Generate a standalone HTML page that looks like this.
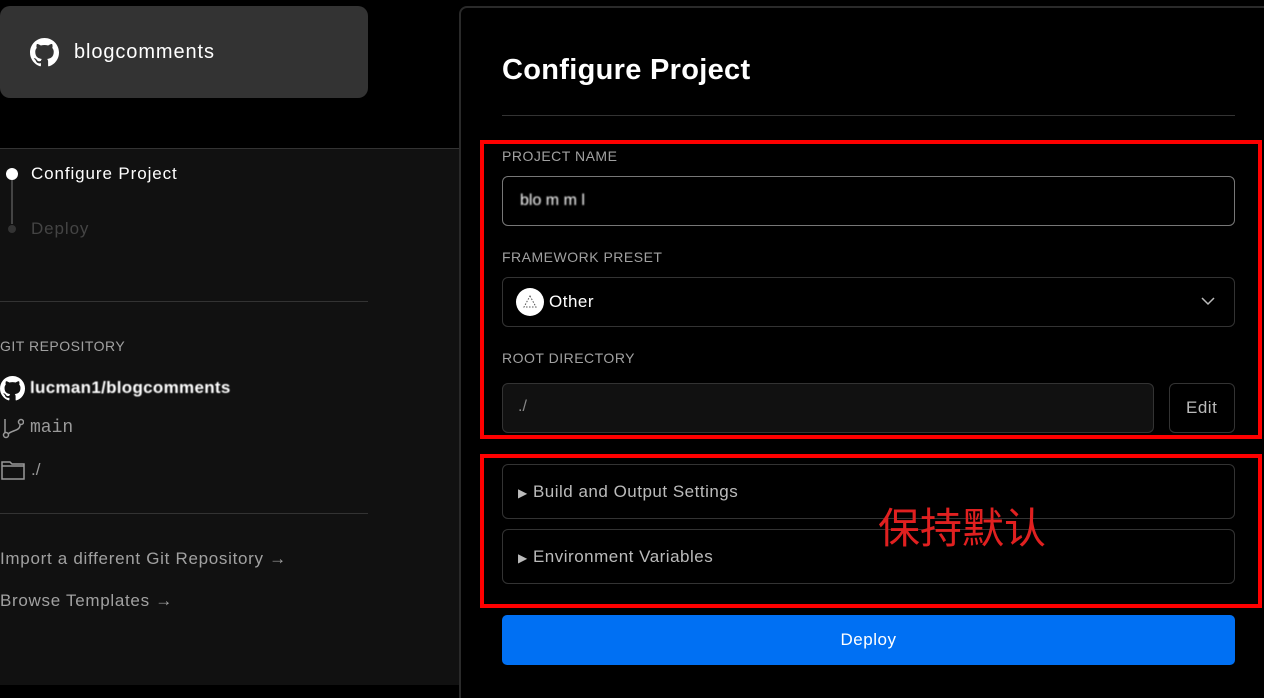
<!DOCTYPE html>
<html style="overflow:hidden;height:698px"><head><meta charset="utf-8"><style>
*{box-sizing:border-box;margin:0;padding:0}
body{width:1264px;height:698px;background:#000;position:relative;overflow:hidden;font-family:"Liberation Sans",sans-serif;color:#ededed}
.abs{position:absolute;white-space:nowrap}
.card{left:0;top:6px;width:368px;height:92px;background:#333;border-radius:10px}
.side{left:0;top:148px;width:459px;height:537px;background:#111;border-top:1px solid #333}
.main{left:459px;top:6px;width:820px;height:692px;border:2px solid #2a2a2a;border-bottom:none;border-right:none;border-radius:8px 0 0 0;background:#000}
.lbl{font-size:14px;color:#a1a1a1;letter-spacing:.5px}
.box{border:1px solid #333;border-radius:6px;background:#0a0a0a}
.red{border:4px solid #f00}
</style></head><body>
<div class="abs card"></div>
<svg class="abs" style="left:30px;top:38px" width="29" height="29" viewBox="0 0 16 16"><path fill="#fff" d="M8 0C3.58 0 0 3.58 0 8c0 3.54 2.290 6.53 5.47 7.59.4.07.55-.17.55-.38v-1.33c-2.23.48-2.7-1.08-2.7-1.08-.36-.92-.89-1.17-.89-1.17-.73-.5.05-.49.05-.49.8.06 1.23.83 1.23.83.71 1.22 1.87.87 2.33.66.07-.52.28-.87.5-1.07-1.780-.2-3.64-.89-3.64-3.95 0-.87.31-1.59.82-2.15-.08-.2-.36-1.02.08-2.12 0 0 .67-.21 2.2.82a7.6 7.6 0 014 0c1.53-1.04 2.2-.82 2.2-.82.44 1.1.16 1.92.08 2.12.51.56.82 1.27.82 2.15 0 3.07-1.87 3.75-3.65 3.95.29.25.54.73.54 1.48v2.2c0 .21.15.46.55.38A8.01 8.01 0 0016 8c0-4.42-3.58-8-8-8z"/></svg>
<div class="abs" style="left:74px;top:41px;font-size:20px;color:#fff;letter-spacing:.9px">blogcomments</div>
<div class="abs side"></div>
<div class="abs" style="left:6px;top:168px;width:12px;height:12px;border-radius:50%;background:#fff"></div>
<div class="abs" style="left:11px;top:180px;width:2px;height:44px;background:#444"></div>
<div class="abs" style="left:8px;top:225px;width:8px;height:8px;border-radius:50%;background:#333"></div>
<div class="abs" style="left:31px;top:164px;font-size:17px;color:#fff;letter-spacing:.9px">Configure Project</div>
<div class="abs" style="left:31px;top:219px;font-size:17px;color:#444;letter-spacing:.9px">Deploy</div>
<div class="abs" style="left:0;top:301px;width:368px;height:1px;background:#333"></div>
<div class="abs lbl" style="left:0;top:338px">GIT REPOSITORY</div>
<svg class="abs" style="left:0;top:376px" width="25" height="25" viewBox="0 0 16 16"><path fill="#fff" d="M8 0C3.58 0 0 3.58 0 8c0 3.54 2.29 6.53 5.47 7.59.4.07.55-.17.55-.38v-1.33c-2.23.48-2.7-1.08-2.7-1.08-.36-.92-.89-1.17-.89-1.17-.73-.5.05-.49.05-.49.8.06 1.23.83 1.23.83.71 1.22 1.87.87 2.33.66.07-.52.28-.87.5-1.07-1.78-.2-3.64-.89-3.64-3.95 0-.87.31-1.59.82-2.15-.08-.2-.36-1.02.08-2.12 0 0 .67-.21 2.2.82a7.6 7.6 0 014 0c1.53-1.04 2.2-.82 2.2-.82.44 1.1.16 1.92.08 2.12.51.56.82 1.27.82 2.15 0 3.07-1.87 3.75-3.65 3.95.29.25.54.73.54 1.48v2.2c0 .21.15.46.55.38A8.01 8.01 0 0016 8c0-4.42-3.58-8-8-8z"/></svg>
<div class="abs" style="left:30px;top:378px;font-size:17px;color:#fff;font-weight:bold;letter-spacing:.3px;filter:blur(.6px)">lucman1/blogcomments</div>
<svg class="abs" style="left:2px;top:417px" width="22" height="22" viewBox="0 0 22 22" fill="none" stroke="#999" stroke-width="1.5"><path d="M3 2v14"/><circle cx="4" cy="18" r="2.5"/><circle cx="19" cy="5" r="2.5"/><path d="M18 8c0 6-8 5-12 9"/></svg>
<div class="abs" style="left:30px;top:418px;font-size:18px;color:#999;font-family:'Liberation Mono',monospace">main</div>
<svg class="abs" style="left:1px;top:460px" width="24" height="20" viewBox="0 0 24 20" fill="none" stroke="#999" stroke-width="1.5"><path d="M1 2h8l2 2h12v15H1z M1 6h22"/></svg>
<div class="abs" style="left:31px;top:460px;font-size:17px;color:#999">./</div>
<div class="abs" style="left:0;top:513px;width:368px;height:1px;background:#333"></div>
<div class="abs" style="left:0;top:549px;font-size:17px;color:#a1a1a1;letter-spacing:.7px">Import a different Git Repository →</div>
<div class="abs" style="left:0;top:591px;font-size:17px;color:#a1a1a1;letter-spacing:.7px">Browse Templates →</div>

<div class="abs main"></div>
<div class="abs" style="left:502px;top:54px;font-size:29px;font-weight:bold;color:#fff;letter-spacing:.3px">Configure Project</div>
<div class="abs" style="left:502px;top:115px;width:733px;height:1px;background:#333"></div>
<div class="abs lbl" style="left:502px;top:148px">PROJECT NAME</div>
<div class="abs box" style="left:502px;top:176px;width:733px;height:50px;background:#000;border-color:#777"></div>
<div class="abs" style="left:520px;top:192px;font-size:16px;color:#fff;filter:blur(.8px)">blo  m  m  l</div>
<div class="abs lbl" style="left:502px;top:249px">FRAMEWORK PRESET</div>
<div class="abs box" style="left:502px;top:277px;width:733px;height:50px;background:#000"></div>
<div class="abs" style="left:516px;top:288px;width:28px;height:28px;border-radius:50%;background:#fff"></div>
<svg class="abs" style="left:522px;top:294px" width="16" height="16" viewBox="0 0 16 16" fill="none" stroke="#555" stroke-dasharray="1.5 1.5"><path d="M8 2L14 13H2z"/></svg>
<div class="abs" style="left:549px;top:292px;font-size:17px;color:#fff;letter-spacing:.5px">Other</div>
<svg class="abs" style="left:1201px;top:296px" width="14" height="10" viewBox="0 0 14 10" fill="none" stroke="#bbb" stroke-width="1.5"><path d="M1 2l6 6 6-6"/></svg>
<div class="abs lbl" style="left:502px;top:350px">ROOT DIRECTORY</div>
<div class="abs box" style="left:502px;top:383px;width:652px;height:50px;background:#111"></div>
<div class="abs" style="left:518px;top:398px;font-size:16px;color:#888">./</div>
<div class="abs box" style="left:1169px;top:383px;width:66px;height:50px;background:#000"></div>
<div class="abs" style="left:1186px;top:398px;font-size:17px;color:#bbb;letter-spacing:.5px">Edit</div>
<div class="abs red" style="left:480px;top:140px;width:782px;height:299px"></div>

<div class="abs box" style="left:502px;top:464px;width:733px;height:55px;background:#000"></div>
<div class="abs" style="left:518px;top:482px;font-size:17px;color:#bbb;letter-spacing:.5px"><span style="font-size:12px">▶</span> Build and Output Settings</div>
<div class="abs box" style="left:502px;top:529px;width:733px;height:55px;background:#000"></div>
<div class="abs" style="left:518px;top:547px;font-size:17px;color:#bbb;letter-spacing:.5px"><span style="font-size:12px">▶</span> Environment Variables</div>
<div class="abs" style="left:878px;top:501px;font-size:42px;color:#e02020;font-family:'Noto Sans CJK SC',sans-serif;line-height:50px">保持默认</div>
<div class="abs red" style="left:480px;top:454px;width:782px;height:154px"></div>

<div class="abs" style="left:502px;top:615px;width:733px;height:50px;background:#0070f3;border-radius:5px;color:#fff;font-size:17px;text-align:center;line-height:50px;letter-spacing:.5px">Deploy</div>
<div class="abs" style="left:0;top:685px;width:459px;height:13px;background:#000"></div>
</body></html>
